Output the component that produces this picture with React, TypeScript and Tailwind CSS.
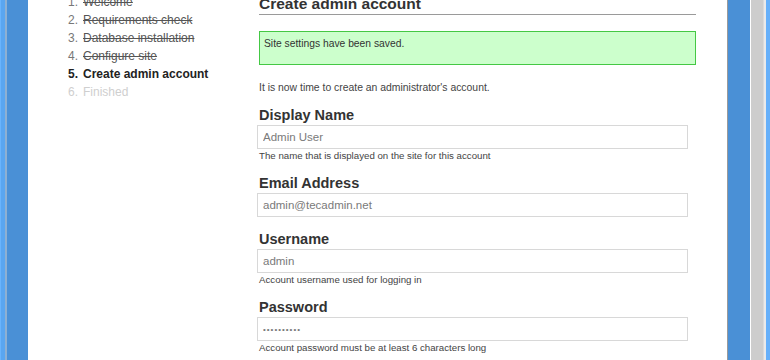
const STEPS = [
  { n: '1.', label: 'Welcome', state: 'done' },
  { n: '2.', label: 'Requirements check', state: 'done' },
  { n: '3.', label: 'Database installation', state: 'done' },
  { n: '4.', label: 'Configure site', state: 'done' },
  { n: '5.', label: 'Create admin account', state: 'current' },
  { n: '6.', label: 'Finished', state: 'todo' },
];

const FIELDS = [
  { label: 'Display Name', value: 'Admin User', help: 'The name that is displayed on the site for this account' },
  { label: 'Email Address', value: 'admin@tecadmin.net', help: '' },
  { label: 'Username', value: 'admin', help: 'Account username used for logging in' },
  { label: 'Password', value: '••••••••••', help: 'Account password must be at least 6 characters long', secret: true },
];

const stepClass = (state: string) => {
  if (state === 'current') return 'font-bold text-[#222]';
  if (state === 'todo') return 'text-[#cfcfcf]';
  return 'text-[#555]';
};

const App = () => {
  return (
    <div className="flex h-[360px] w-[770px] overflow-hidden bg-white font-['Liberation_Sans',Arial,sans-serif]">
      {/* left window frame */}
      <div className="flex h-full shrink-0">
        <div className="w-px bg-[#6ab4fc]" />
        <div className="w-[4px] bg-[#5aa6f0]" />
        <div className="w-[2px] bg-[#8eb0d2]" />
        <div className="w-[21px] bg-[#4a90d6]" />
      </div>

      <div className="flex flex-1">
        {/* steps */}
        <ol className="mt-[-7px] w-[231px] shrink-0 pl-[40px] text-[12px] leading-[18px]">
          {STEPS.map((s) => (
            <li key={s.n} className={`flex ${stepClass(s.state)}`}>
              <span className={`w-[15px] ${s.state === 'done' ? 'text-[#777]' : ''}`}>{s.n}</span>
              <span className={s.state === 'done' ? 'line-through' : ''}>{s.label}</span>
            </li>
          ))}
        </ol>

        {/* form */}
        <div className="mt-[-6px] w-[437px] shrink-0">
          <h2 className="border-b border-[#9a9a9a] text-[15.5px] font-bold leading-[20px] text-[#333]">
            Create admin account
          </h2>
          <div className="mt-[16px] h-[34px] border border-[#44c844] bg-[#ccffcc] px-[4px] pt-[5px] text-[10.3px] leading-[14px] text-[#333]">
            Site settings have been saved.
          </div>
          <p className="mt-[16px] text-[10.4px] leading-[14px] text-[#444]">
            It is now time to create an administrator's account.
          </p>

          <div className="mt-[10px]">
            {FIELDS.map((f) => (
              <div key={f.label} className={f.help ? 'mb-[11px]' : 'mb-[12px]'}>
                <label className="block text-[14.5px] font-bold leading-[20px] text-[#333]">{f.label}</label>
                <input
                  readOnly
                  value={f.value}
                  className={`-ml-[2px] block h-[24px] w-[431px] border border-[#d8d8d8] bg-white pl-[5px] text-[#7a7a7a] outline-none ${
                    f.secret ? 'text-[8px] tracking-[1px]' : 'text-[11.5px]'
                  }`}
                />
                {f.help && (
                  <div className="mt-[1px] text-[9.7px] leading-[12px] text-[#444]">{f.help}</div>
                )}
              </div>
            ))}
          </div>
        </div>
      </div>

      {/* right window frame */}
      <div className="flex h-full shrink-0">
        <div className="w-px bg-[#9a9a9a]" />
        <div className="w-[22px] bg-[#4a90d6]" />
        <div className="w-px bg-white" />
        <div className="w-[12px] bg-[#cdcdcd]" />
        <div className="w-px bg-[#dadada]" />
        <div className="w-[2px] bg-[#eaeaea]" />
        <div className="w-[4px] bg-[#66b0fa]" />
      </div>
    </div>
  );
};

export default App;
